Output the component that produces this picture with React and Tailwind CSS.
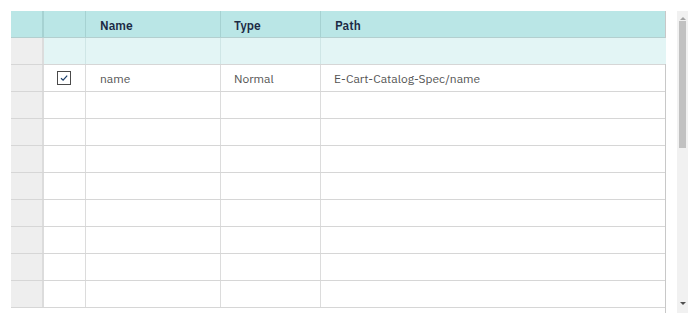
import React from "react";

const cols = "grid grid-cols-[33px_42px_135px_100px_345px]";

function Row({ children, className = "" }) {
  return <div className={`${cols} h-[27px] border-b border-[#d6d6d6] ${className}`}>{children}</div>;
}

export default function App() {
  const empty = Array.from({ length: 8 });
  return (
    <div className="w-[690px] h-[313px] bg-white relative overflow-hidden" style={{ fontFamily: '"IBM Plex Sans", "Noto Sans", Arial, sans-serif' }}>
      <div className="flex pt-[11px] pl-[11px]">
        <div className="w-[655px] border-r border-[#c8c8c8]">
          <Row className="bg-[#bae6e6] border-b-[#b3cfcf]">
            <div className="border-r-2 border-[#a6d2d2]" />
            <div className="border-r border-[#a6d2d2]" />
            <div className="border-r border-[#a6d2d2] pl-[14px] pt-[3px] flex items-center text-[12px] font-semibold text-[#1c2a44]">Name</div>
            <div className="border-r border-[#a6d2d2] pl-[13px] pt-[3px] flex items-center text-[12px] font-semibold text-[#1c2a44]">Type</div>
            <div className="pl-[14px] pt-[3px] flex items-center text-[12px] font-semibold text-[#1c2a44]">Path</div>
          </Row>
          <Row>
            <div className="bg-[#eeeeee] border-r-2 border-[#dcdcdc]" />
            <div className="bg-[#e3f5f5] border-r border-[#cfe6e6]" />
            <div className="bg-[#e3f5f5] border-r border-[#cfe6e6]" />
            <div className="bg-[#e3f5f5] border-r border-[#cfe6e6]" />
            <div className="bg-[#e3f5f5]" />
          </Row>
          <Row>
            <div className="bg-[#eeeeee] border-r-2 border-[#dcdcdc]" />
            <div className="border-r border-[#dcdcdc] flex items-center justify-center pr-[1px]">
              <div className="w-[14px] h-[14px] border border-[#4a4a4a] flex items-center justify-center">
                <svg width="10" height="10" viewBox="0 0 10 10"><path d="M2 5.2 L4.1 7.2 L8.2 2.6" fill="none" stroke="#1c3f6b" strokeWidth="1.2" /></svg>
              </div>
            </div>
            <div className="border-r border-[#dcdcdc] pl-[14px] pt-[2px] flex items-center text-[12px] text-[#555555]">name</div>
            <div className="border-r border-[#dcdcdc] pl-[13px] pt-[2px] flex items-center text-[12px] text-[#555555]">Normal</div>
            <div className="pl-[13px] pt-[2px] flex items-center text-[12px] text-[#555555]">E-Cart-Catalog-Spec/name</div>
          </Row>
          {empty.map((_, i) => (
            <Row key={i}>
              <div className="bg-[#eeeeee] border-r-2 border-[#dcdcdc]" />
              <div className="border-r border-[#dcdcdc]" />
              <div className="border-r border-[#dcdcdc]" />
              <div className="border-r border-[#dcdcdc]" />
              <div />
            </Row>
          ))}
        </div>
        <div className="ml-[11px] w-[11px] h-[302px] bg-[#f1f1f1] flex flex-col items-center">
          <div className="h-[9px] flex items-end justify-center">
            <div className="w-0 h-0 border-l-[3px] border-r-[3px] border-b-[3px] border-l-transparent border-r-transparent border-b-[#a3a3a3]" />
          </div>
          <div className="mt-[1px] w-[7px] h-[127px] bg-[#c1c1c1]" />
          <div className="flex-1" />
          <div className="h-[11px] flex items-start justify-center">
            <div className="w-0 h-0 border-l-[3px] border-r-[3px] border-t-[3px] border-l-transparent border-r-transparent border-t-[#505050]" />
          </div>
        </div>
      </div>
    </div>
  );
}
